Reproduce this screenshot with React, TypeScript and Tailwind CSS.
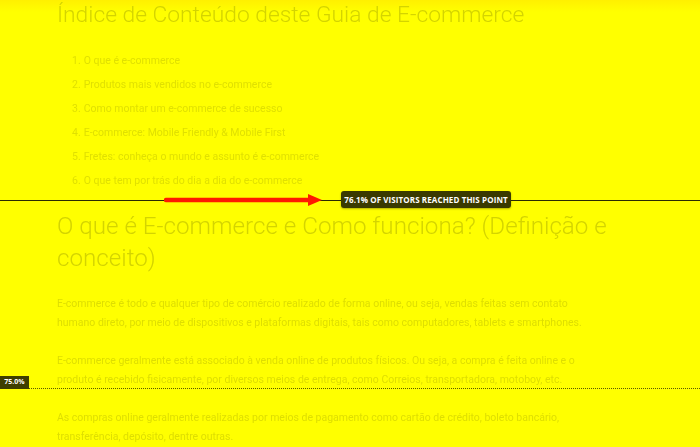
import React from "react";

const indexItems = [
  "O que é e-commerce",
  "Produtos mais vendidos no e-commerce",
  "Como montar um e-commerce de sucesso",
  "E-commerce: Mobile Friendly & Mobile First",
  "Fretes: conheça o mundo e assunto é e-commerce",
  "O que tem por trás do dia a dia do e-commerce",
];

function Arrow() {
  return (
    <svg width="160" height="14" viewBox="0 0 160 14" className="block">
      <line x1="2" y1="7" x2="146" y2="7" stroke="#ff1a00" strokeWidth="4.5" strokeLinecap="round" />
      <path d="M144 1 L158 7 L144 13 Z" fill="#ff1a00" />
    </svg>
  );
}

export default function App() {
  return (
    <div
      className="relative w-full h-[447px] overflow-hidden bg-[#ffff00]"
      style={{ fontFamily: "Roboto, 'Liberation Sans', sans-serif" }}
    >
      {/* top fade strip */}
      <div className="absolute inset-x-0 top-0 h-[12px] bg-gradient-to-b from-[#fff000] to-[#ffff00]" />

      {/* page content, faded under the heatmap */}
      <div className="relative flex flex-col pl-[57px] w-[640px] blur-[0.3px]">
        <h1 className="text-[22.8px] leading-[32px] font-light text-[#d4d400] -mt-[1px] whitespace-nowrap">
          Índice de Conteúdo deste Guia de E-commerce
        </h1>

        <ol className="mt-[18px] pl-[15px] flex flex-col text-[10.5px] leading-[24px] text-[#e0e000]">
          {indexItems.map((item, i) => (
            <li key={i} className="flex gap-[3px]">
              <span>{i + 1}.</span>
              <span>{item}</span>
            </li>
          ))}
        </ol>

        <h2 className="mt-[17px] w-[570px] text-[24.2px] leading-[32px] font-light text-[#d4d400]">
          O que é E-commerce e Como funciona? (Definição e conceito)
        </h2>

        <div className="mt-[20px] w-[530px] flex flex-col gap-[19px] text-[10.5px] leading-[19px] text-[#dede00]">
          <p>
            E-commerce é todo e qualquer tipo de comércio realizado de forma online, ou seja, vendas feitas sem contato
            humano direto, por meio de dispositivos e plataformas digitais, tais como computadores, tablets e smartphones.
          </p>
          <p>
            E-commerce geralmente está associado à venda online de produtos físicos. Ou seja, a compra é feita online e o
            produto é recebido fisicamente, por diversos meios de entrega, como Correios, transportadora, motoboy, etc.
          </p>
          <p>
            As compras online geralmente realizadas por meios de pagamento como cartão de crédito, boleto bancário,
            transferência, depósito, dentre outras.
          </p>
        </div>
      </div>

      {/* 76.1% marker */}
      <div className="absolute left-0 right-0 top-[200px] h-px bg-[#2b2b00]" />
      <div className="absolute left-[164px] top-[193px]">
        <Arrow />
      </div>
      <div
        className="absolute left-[341px] top-[191px] h-[17px] w-[170px] rounded-[3px] bg-[#3a3a00] flex items-center justify-center text-white text-[8px] font-bold tracking-[0.1px] shadow-[0_1px_2px_rgba(0,0,0,0.3)]"
        style={{ fontFamily: "'Open Sans', 'Liberation Sans', sans-serif" }}
      >
        76.1% OF VISITORS REACHED THIS POINT
      </div>

      {/* 75.0% fold marker */}
      <div className="absolute left-[29px] right-0 top-[388px] border-t border-dotted border-[#5a5a00]" />
      <div
        className="absolute left-0 top-[376px] h-[13px] w-[29px] bg-[#3f3f00] flex items-center justify-center text-white text-[7px] font-bold"
        style={{ fontFamily: "'Open Sans', 'Liberation Sans', sans-serif" }}
      >
        75.0%
      </div>
    </div>
  );
}
